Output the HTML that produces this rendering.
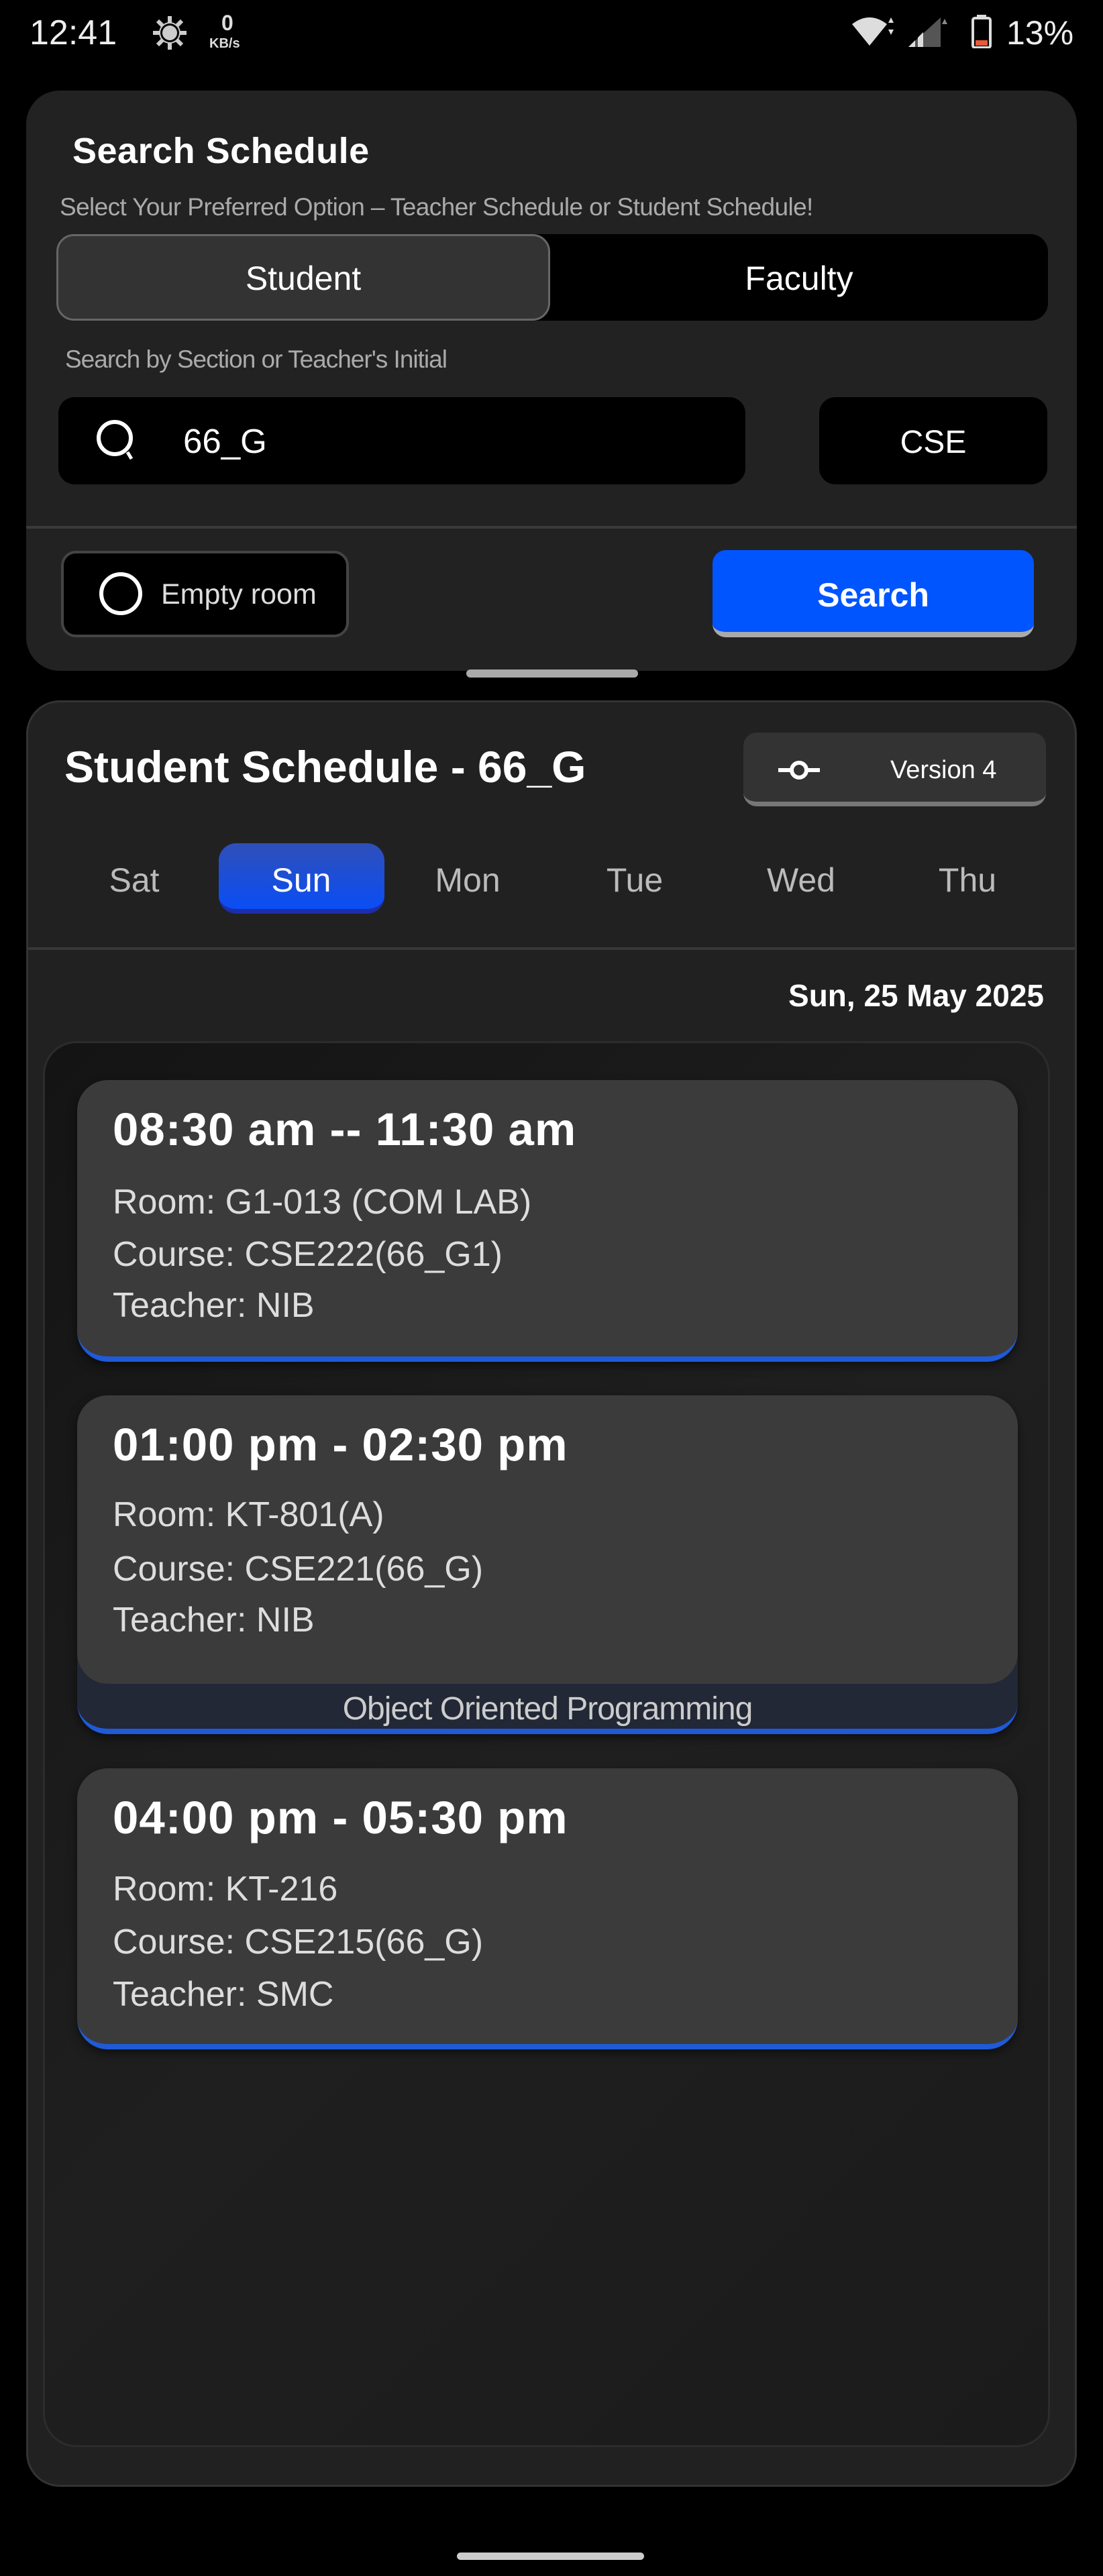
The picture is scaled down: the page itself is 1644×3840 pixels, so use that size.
<!DOCTYPE html>
<html><head><meta charset="utf-8"><style>
*{margin:0;padding:0;box-sizing:border-box}
html,body{width:1644px;height:3840px;background:#000;overflow:hidden;font-family:"Liberation Sans",sans-serif;color:#fff}
.a{position:absolute}
.t{position:absolute;white-space:nowrap;line-height:1}
.card{position:absolute;left:115px;width:1402px;background:#3b3b3b;border-radius:46px;border-bottom:8px solid #1f5ad8;box-shadow:0 6px 14px rgba(0,0,0,.5)}
.tm{font-weight:bold;font-size:69px;letter-spacing:1px}
.ln{font-size:52px;color:#ddd;letter-spacing:0}
.day{position:absolute;top:1287px;width:200px;text-align:center;font-size:50px;color:#bbb;line-height:1}
</style></head><body>
<!-- status bar -->
<div class="t" style="left:44px;top:23px;font-size:52px;color:#eee">12:41</div>
<svg class="a" style="left:224px;top:20px" width="58" height="58" viewBox="0 0 58 58"><g fill="#ccc"><circle cx="29" cy="29" r="16"/><g stroke="#ccc" stroke-width="6"><line x1="29" y1="4" x2="29" y2="54"/><line x1="4" y1="29" x2="54" y2="29"/><line x1="11" y1="11" x2="47" y2="47"/><line x1="47" y1="11" x2="11" y2="47"/></g><circle cx="29" cy="29" r="14" fill="#000"/><circle cx="29" cy="29" r="11" fill="#ccc"/></g></svg>
<div class="t" style="left:330px;top:18px;font-size:32px;font-weight:bold;color:#ddd">0</div>
<div class="t" style="left:312px;top:55px;font-size:20px;font-weight:bold;color:#ddd">KB/s</div>
<svg class="a" style="left:1268px;top:22px" width="72" height="50" viewBox="0 0 72 50"><path d="M2 14 Q28 -6 54 14 L28 46 Z" fill="#ddd"/><path d="M60 4 L64 12 L56 12 Z M60 30 L64 22 L56 22Z" fill="#ddd"/></svg>
<svg class="a" style="left:1352px;top:26px" width="62" height="44" viewBox="0 0 62 44"><path d="M2 44 L50 0 L50 44Z" fill="#555"/><path d="M2 44 L12 34 L12 44Z M16 44 L16 30 L24 22 L24 44Z" fill="#ddd"/><path d="M56 2 L60 10 L52 10Z" fill="#888"/></svg>
<svg class="a" style="left:1448px;top:22px" width="32" height="50" viewBox="0 0 32 50"><rect x="8" y="0" width="14" height="5" fill="#ddd"/><rect x="2" y="5" width="26" height="44" rx="3" fill="none" stroke="#ddd" stroke-width="4"/><rect x="6" y="38" width="18" height="8" fill="#e85a3a"/></svg>
<div class="t" style="left:1500px;top:24px;font-size:50px;color:#eee">13%</div>

<!-- top card -->
<div class="a" style="left:39px;top:135px;width:1566px;height:865px;background:#222;border-radius:50px"></div>
<div class="t" style="left:108px;top:198px;font-size:54px;font-weight:bold;letter-spacing:.5px">Search Schedule</div>
<div class="t" style="left:89px;top:290px;font-size:37px;color:#aaa;letter-spacing:-.6px">Select Your Preferred Option – Teacher Schedule or Student Schedule!</div>
<div class="a" style="left:84px;top:349px;width:1478px;height:129px;background:#000;border-radius:26px"></div>
<div class="a" style="left:84px;top:349px;width:736px;height:129px;background:#333;border:3px solid #666;border-radius:26px"></div>
<div class="t" style="left:84px;top:390px;width:736px;text-align:center;font-size:50px">Student</div>
<div class="t" style="left:820px;top:390px;width:742px;text-align:center;font-size:50px">Faculty</div>
<div class="t" style="left:97px;top:517px;font-size:37px;color:#aaa;letter-spacing:-1px">Search by Section or Teacher's Initial</div>
<div class="a" style="left:87px;top:592px;width:1024px;height:130px;background:#000;border-radius:24px"></div>
<svg class="a" style="left:140px;top:622px" width="76" height="70" viewBox="0 0 76 70"><circle cx="31" cy="31" r="24" fill="none" stroke="#fff" stroke-width="6"/><line x1="50" y1="52" x2="56" y2="62" stroke="#fff" stroke-width="5"/></svg>
<div class="t" style="left:273px;top:632px;font-size:51px">66_G</div>
<div class="a" style="left:1221px;top:592px;width:340px;height:130px;background:#000;border-radius:24px"></div>
<div class="t" style="left:1221px;top:636px;width:340px;text-align:center;font-size:48px">CSE</div>
<div class="a" style="left:39px;top:784px;width:1566px;height:4px;background:#3a3a3a"></div>
<div class="a" style="left:91px;top:821px;width:429px;height:129px;background:#000;border:4px solid #444;border-radius:22px"></div>
<div class="a" style="left:148px;top:853px;width:64px;height:64px;border:6px solid #fff;border-radius:50%"></div>
<div class="t" style="left:240px;top:865px;font-size:43px;color:#ddd">Empty room</div>
<div class="a" style="left:1062px;top:820px;width:479px;height:130px;background:#0055ff;border-radius:20px;border-bottom:8px solid #aaa"></div>
<div class="t" style="left:1062px;top:862px;width:479px;text-align:center;font-size:50px;font-weight:bold">Search</div>
<div class="a" style="left:695px;top:998px;width:256px;height:12px;background:#aaa;border-radius:6px"></div>

<!-- schedule card -->
<div class="a" style="left:39px;top:1044px;width:1566px;height:2663px;background:#212121;border:3px solid #333;border-radius:50px"></div>
<div class="t" style="left:96px;top:1110px;font-size:66px;font-weight:bold;letter-spacing:0">Student Schedule - 66_G</div>
<div class="a" style="left:1108px;top:1092px;width:451px;height:110px;background:#333;border-radius:20px;border-bottom:7px solid #777"></div>
<svg class="a" style="left:1158px;top:1130px" width="66" height="36" viewBox="0 0 66 36"><line x1="2" y1="18" x2="64" y2="18" stroke="#fff" stroke-width="6"/><circle cx="33" cy="18" r="11" fill="#333" stroke="#fff" stroke-width="6"/></svg>
<div class="t" style="left:1327px;top:1129px;font-size:38px">Version 4</div>
<div class="a" style="left:326px;top:1257px;width:247px;height:105px;border-radius:26px;background:linear-gradient(#2f4fb8,#0a4ef5);border-bottom:7px solid #1d2ea8"></div>
<div class="day" style="left:100px">Sat</div>
<div class="day" style="left:349px;color:#fff">Sun</div>
<div class="day" style="left:597px">Mon</div>
<div class="day" style="left:846px">Tue</div>
<div class="day" style="left:1094px">Wed</div>
<div class="day" style="left:1342px">Thu</div>
<div class="a" style="left:42px;top:1412px;width:1560px;height:4px;background:#383838"></div>
<div class="t" style="left:900px;top:1461px;width:656px;text-align:right;font-size:46px;font-weight:bold">Sun, 25 May 2025</div>
<div class="a" style="left:64px;top:1552px;width:1501px;height:2096px;background:linear-gradient(135deg,#141414,#1f1f1f 50%,#1b1b1b);border:3px solid #2c2c2c;border-radius:50px"></div>

<div class="card" style="top:1610px;height:420px"></div>
<div class="t tm" style="left:168px;top:1649px">08:30 am -- 11:30 am</div>
<div class="t ln" style="left:168px;top:1766px">Room: G1-013 (COM LAB)</div>
<div class="t ln" style="left:168px;top:1844px">Course: CSE222(66_G1)</div>
<div class="t ln" style="left:168px;top:1920px">Teacher: NIB</div>

<div class="card" style="top:2080px;height:505px;background:#222836"></div>
<div class="a" style="left:115px;top:2080px;width:1402px;height:430px;background:#3b3b3b;border-radius:46px"></div>
<div class="t" style="left:115px;top:2524px;width:1402px;text-align:center;font-size:48px;color:#ccc;letter-spacing:-1px">Object Oriented Programming</div>
<div class="t tm" style="left:168px;top:2119px">01:00 pm - 02:30 pm</div>
<div class="t ln" style="left:168px;top:2232px">Room: KT-801(A)</div>
<div class="t ln" style="left:168px;top:2313px">Course: CSE221(66_G)</div>
<div class="t ln" style="left:168px;top:2389px">Teacher: NIB</div>

<div class="card" style="top:2636px;height:419px"></div>
<div class="t tm" style="left:168px;top:2675px">04:00 pm - 05:30 pm</div>
<div class="t ln" style="left:168px;top:2790px">Room: KT-216</div>
<div class="t ln" style="left:168px;top:2869px">Course: CSE215(66_G)</div>
<div class="t ln" style="left:168px;top:2947px">Teacher: SMC</div>

<div class="a" style="left:681px;top:3805px;width:279px;height:11px;background:#ccc;border-radius:6px"></div>
</body></html>
